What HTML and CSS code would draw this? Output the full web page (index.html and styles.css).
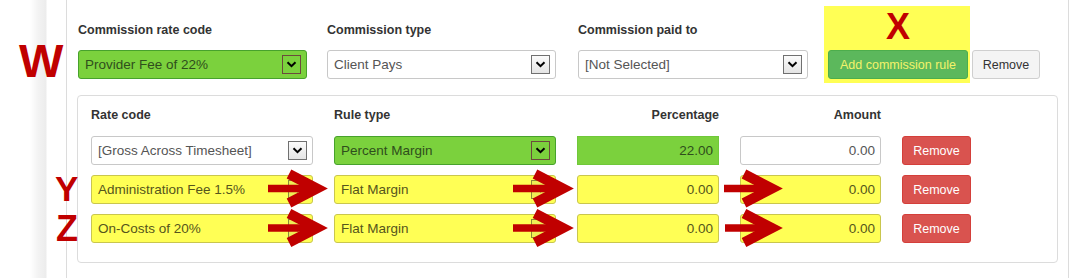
FILE: index.html
```html
<!DOCTYPE html>
<html>
<head>
<meta charset="utf-8">
<link rel="stylesheet" href="styles.css">
</head>
<body>
<div class="page">
  <div class="gutter"></div>
  <main class="content">
    <div class="top-row">
      <div class="fcol c1">
        <label class="lbl">Commission rate code</label>
        <div class="field sel green"><span>Provider Fee of 22%</span><span class="caret"><svg width="11" height="7" viewBox="0 0 11 7"><path d="M1.5 1.2 L5.5 5.2 L9.5 1.2" fill="none" stroke="#000" stroke-width="2"/></svg></span></div>
      </div>
      <div class="fcol c2">
        <label class="lbl">Commission type</label>
        <div class="field sel"><span>Client Pays</span><span class="caret"><svg width="11" height="7" viewBox="0 0 11 7"><path d="M1.5 1.2 L5.5 5.2 L9.5 1.2" fill="none" stroke="#000" stroke-width="2"/></svg></span></div>
      </div>
      <div class="fcol c3">
        <label class="lbl">Commission paid to</label>
        <div class="field sel"><span>[Not Selected]</span><span class="caret"><svg width="11" height="7" viewBox="0 0 11 7"><path d="M1.5 1.2 L5.5 5.2 L9.5 1.2" fill="none" stroke="#000" stroke-width="2"/></svg></span></div>
      </div>
      <div class="hl">
        <div class="mark-x">X</div>
        <button class="btn btn-add">Add commission rule</button>
      </div>
      <button class="btn btn-gray">Remove</button>
    </div>

    <div class="panel">
      <div class="grid">
        <div class="hd">Rate code</div>
        <div class="hd">Rule type</div>
        <div class="hd right">Percentage</div>
        <div class="hd right">Amount</div>
        <div class="hd"></div>

        <div class="field sel"><span>[Gross Across Timesheet]</span><span class="caret"><svg width="11" height="7" viewBox="0 0 11 7"><path d="M1.5 1.2 L5.5 5.2 L9.5 1.2" fill="none" stroke="#000" stroke-width="2"/></svg></span></div>
        <div class="field sel green"><span>Percent Margin</span><span class="caret"><svg width="11" height="7" viewBox="0 0 11 7"><path d="M1.5 1.2 L5.5 5.2 L9.5 1.2" fill="none" stroke="#000" stroke-width="2"/></svg></span></div>
        <div class="field num green flat">22.00</div>
        <div class="field num">0.00</div>
        <button class="btn btn-red">Remove</button>

        <div class="field sel yellow"><span>Administration Fee 1.5%</span><span class="caret"><svg width="11" height="7" viewBox="0 0 11 7"><path d="M1.5 1.2 L5.5 5.2 L9.5 1.2" fill="none" stroke="#333" stroke-width="2"/></svg></span></div>
        <div class="field sel yellow"><span>Flat Margin</span><span class="caret"><svg width="11" height="7" viewBox="0 0 11 7"><path d="M1.5 1.2 L5.5 5.2 L9.5 1.2" fill="none" stroke="#333" stroke-width="2"/></svg></span></div>
        <div class="field num yellow">0.00</div>
        <div class="field num yellow">0.00</div>
        <button class="btn btn-red">Remove</button>

        <div class="field sel yellow"><span>On-Costs of 20%</span><span class="caret"><svg width="11" height="7" viewBox="0 0 11 7"><path d="M1.5 1.2 L5.5 5.2 L9.5 1.2" fill="none" stroke="#333" stroke-width="2"/></svg></span></div>
        <div class="field sel yellow"><span>Flat Margin</span><span class="caret"><svg width="11" height="7" viewBox="0 0 11 7"><path d="M1.5 1.2 L5.5 5.2 L9.5 1.2" fill="none" stroke="#333" stroke-width="2"/></svg></span></div>
        <div class="field num yellow">0.00</div>
        <div class="field num yellow">0.00</div>
        <button class="btn btn-red">Remove</button>
      </div>
    </div>
  </main>

  <div class="mark mark-w">W</div>
  <div class="mark mark-y">Y</div>
  <div class="mark mark-z">Z</div>

  <svg class="arrows" width="1070" height="278" viewBox="0 0 1070 278">
    <g fill="none" stroke="#c00000" stroke-linejoin="miter">
      <path d="M268 188.5 H316" stroke-width="7.5"/>
      <polyline points="289,174 317,188.5 289,203" stroke-width="10"/>
      <path d="M513 188.5 H562" stroke-width="7.5"/>
      <polyline points="535,174 563,188.5 535,203" stroke-width="10"/>
      <path d="M724 188.5 H771" stroke-width="7.5"/>
      <polyline points="744,174 772,188.5 744,203" stroke-width="10"/>

      <path d="M268 228 H316" stroke-width="7.5"/>
      <polyline points="289,213.5 317,228 289,242.5" stroke-width="10"/>
      <path d="M513 228 H562" stroke-width="7.5"/>
      <polyline points="535,213.5 563,228 535,242.5" stroke-width="10"/>
      <path d="M725 228 H771" stroke-width="7.5"/>
      <polyline points="744,213.5 772,228 744,242.5" stroke-width="10"/>
    </g>
  </svg>
</div>
</body>
</html>
```

FILE: styles.css
```css
html, body {
  margin: 0;
  padding: 0;
  background: #fff;
  font-family: "Liberation Sans", Arial, sans-serif;
}

.page {
  position: relative;
  width: 1070px;
  height: 278px;
  display: flex;
  overflow: hidden;
}

.gutter {
  width: 66px;
  flex: none;
  background: linear-gradient(to right, #fff 0, #fff 30px, #f3f3f3 38px, #ececec 46px, #fff 47px, #fff 66px);
}

.content {
  width: 1001px;
  flex: none;
  border-left: 1px solid #dcdcdc;
  border-right: 1px solid #dcdcdc;
}

/* top row */
.top-row {
  display: flex;
  align-items: flex-end;
  padding: 6px 0 0 11px;
}

.fcol { margin-bottom: 4px; }
.fcol.c1 { width: 229px; margin-right: 20px; }
.fcol.c2 { width: 229px; margin-right: 22px; }
.fcol.c3 { width: 230px; margin-right: 16px; }

.lbl {
  display: block;
  font-weight: bold;
  font-size: 12.5px;
  line-height: 18px;
  color: #333;
  margin-bottom: 11px;
}

.hl {
  width: 146px;
  box-sizing: border-box;
  background: #ffff55;
  padding: 3px 2px 4px 4px;
}

.mark-x {
  font-weight: bold;
  font-size: 36px;
  line-height: 36px;
  color: #c00000;
  text-align: center;
  margin-bottom: 5px;
}

/* fields */
.field {
  height: 29px;
  box-sizing: border-box;
  border: 1px solid #c8c8c8;
  border-radius: 3px;
  background: #fff;
  font-size: 13.5px;
  color: #555;
  display: flex;
  align-items: center;
  padding: 0 5px 0 6px;
  white-space: nowrap;
}

.sel { justify-content: space-between; }
.num { justify-content: flex-end; }

.caret {
  width: 19px;
  height: 19px;
  box-sizing: border-box;
  border: 1px solid #707070;
  background: linear-gradient(#fbfbfb, #e4e4e4);
  display: flex;
  align-items: center;
  justify-content: center;
  flex: none;
}

.green {
  background: #7bd13d;
  border-color: #47a22c;
  color: #2f4e1c;
}
.green .caret {
  background: transparent;
  border-color: #6b4b3c;
}
.green.flat { border-radius: 0; border-color: #70c83a; }

.yellow {
  background: #ffff55;
  border-color: #c9c64e;
  color: #55551c;
}
.yellow .caret {
  background: #eeee55;
  border-color: #8a8a3a;
}

/* buttons */
.btn {
  height: 29px;
  box-sizing: border-box;
  border-radius: 3px;
  font-family: "Liberation Sans", Arial, sans-serif;
  font-size: 12.5px;
  padding: 0;
  cursor: pointer;
}

.btn-add {
  width: 140px;
  background: #5cb85c;
  border: 1px solid #4cae4c;
  color: #f3f36a;
}

.btn-gray {
  width: 68px;
  margin-left: 2px;
  margin-bottom: 4px;
  background: #f4f4f4;
  border: 1px solid #cfcfcf;
  color: #333;
}

.btn-red {
  width: 69px;
  background: #d9534f;
  border: 1px solid #d43f3a;
  color: #fff;
}

/* panel */
.panel {
  margin: 12px 10px 0 10px;
  border: 1px solid #dcdcdc;
  border-radius: 4px;
  padding: 10px 0 19px 13px;
}

.grid {
  display: grid;
  grid-template-columns: 222px 222px 142px 141px 69px;
  column-gap: 21px;
  row-gap: 10px;
}

.hd {
  font-weight: bold;
  font-size: 12.5px;
  line-height: 18px;
  color: #333;
  margin-bottom: 2px;
}
.hd.right { text-align: right; }

/* annotation letters */
.mark {
  position: absolute;
  font-weight: bold;
  line-height: 1;
  color: #c00000;
}
.mark-w { left: 19px; top: 37px; font-size: 47px; }
.mark-y { left: 55px; top: 171px; font-size: 35px; }
.mark-z { left: 56px; top: 211px; font-size: 36px; }

.arrows {
  position: absolute;
  left: 0;
  top: 0;
  pointer-events: none;
}
```
